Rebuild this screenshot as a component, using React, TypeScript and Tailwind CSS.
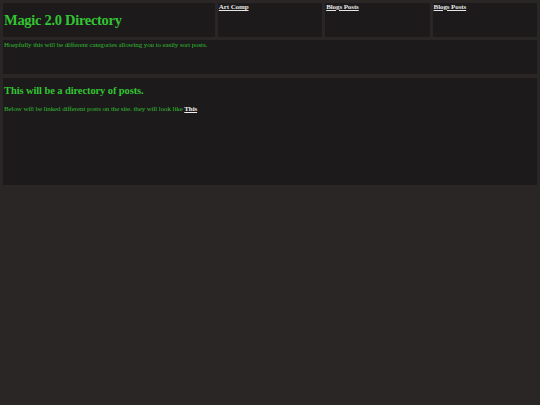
import React from 'react';

const App = () => {
  const links = ['Art Comp', 'Blogs Posts', 'Blogs Posts'];

  return (
    <div className="min-h-[405px] w-full bg-[#2a2626] p-[3px] font-['Liberation_Serif',serif]">
      <div className="grid grid-cols-5 gap-[3px]">
        <div className="col-span-2 flex h-[34px] items-center bg-[#1c1a1a] px-[1px]">
          <h1 className="text-[14.5px] font-bold leading-none tracking-[-0.3px] text-[#33c433]">
            Magic 2.0 Directory
          </h1>
        </div>
        {links.map((label, i) => (
          <div key={i} className="h-[34px] bg-[#1c1a1a] px-[1px] text-[7px] leading-[9px] tracking-[-0.1px]">
            <a href="#" className="font-bold text-[#e6e6e6] underline">
              {label}
            </a>
          </div>
        ))}
        <div className="col-span-5 h-[34px] bg-[#1c1a1a] px-[1px] pt-[1px] text-[7px] leading-[9px] tracking-[-0.1px]">
          <p className="text-[#33bb33]">
            Hoepfully this will be different categories allowing you to easily sort posts.
          </p>
        </div>
      </div>
      <div className="mt-[4px] h-[107px] bg-[#1c1a1a] px-[1px] pt-[8px]">
        <h2 className="text-[10.5px] font-bold leading-none tracking-[-0.1px] text-[#33c433]">
          This will be a directory of posts.
        </h2>
        <p className="mt-[9px] text-[7px] leading-none tracking-[-0.1px] text-[#33bb33]">
          Below will be linked different posts on the site. they will look like{' '}
          <a href="#" className="font-bold text-[#f0f0f0] underline">
            This
          </a>
        </p>
      </div>
    </div>
  );
};

export default App;
